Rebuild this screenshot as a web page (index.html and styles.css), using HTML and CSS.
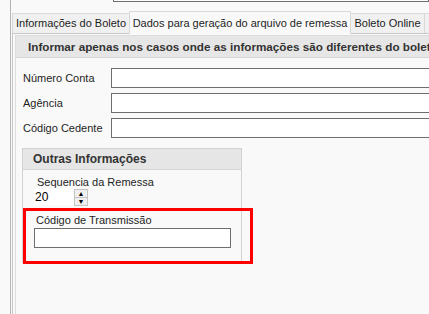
FILE: index.html
```html
<!DOCTYPE html>
<html lang="pt-BR">
<head>
  <meta charset="UTF-8">
  <title>Dados para geração do arquivo de remessa</title>
  <link rel="stylesheet" href="styles.css">
</head>
<body>
  <div class="window">
    <!-- borda inferior do campo que fica acima das abas -->
    <div class="top">
      <div class="top-field"></div>
    </div>

    <!-- Abas -->
    <div class="tabs">
      <div class="tab tab-boleto">Informações do Boleto</div>
      <div class="tab tab-remessa active">Dados para geração do arquivo de remessa</div>
      <div class="tab tab-online">Boleto Online</div>
      <div class="tab tab-more"></div>
    </div>

    <!-- Conteúdo da aba ativa -->
    <div class="page">
      <div class="inner">
        <div class="banner">Informar apenas nos casos onde as informações são diferentes do boleto</div>

        <div class="form">
          <div class="row">
            <span class="row-label">Número Conta</span>
            <div class="field"></div>
          </div>
          <div class="row">
            <span class="row-label">Agência</span>
            <div class="field"></div>
          </div>
          <div class="row">
            <span class="row-label">Código Cedente</span>
            <div class="field"></div>
          </div>
        </div>

        <div class="group">
          <div class="group-title">Outras Informações</div>
          <div class="group-body">
            <div class="label label-seq">Sequencia da Remessa</div>
            <div class="spin">
              <div class="spin-value">20</div>
              <div class="spin-buttons">
                <span class="spin-btn">&#9650;</span>
                <span class="spin-btn">&#9660;</span>
              </div>
            </div>
            <div class="label label-cod">Código de Transmissão</div>
            <div class="field field-cod"></div>
          </div>
        </div>

        <!-- destaque vermelho sobre o campo -->
        <div class="highlight"></div>
      </div>
    </div>
  </div>
</body>
</html>
```

FILE: styles.css
```css
/* ====== RESET ====== */
html, body {
  margin: 0;
  padding: 0;
}

body {
  width: 429px;
  height: 314px;
  overflow: hidden;
  background-color: #f9f9f9;
  color: #1e1e1e;
  font-family: "Liberation Sans", Arial, sans-serif;
  font-size: 11px;
}

/* ====== JANELA ====== */
.window {
  margin-left: 10px;
  height: 314px;
  overflow: hidden;
  border-left: 1px solid #b4b4b4;
}

.top {
  height: 11px;
}
.top-field {
  margin-left: 102px;
  height: 1px;
  background-color: #ffffff;
  border: 1px solid #6e6e6e;
  border-top: 0;
}

/* ====== ABAS ====== */
.tabs {
  display: flex;
  align-items: flex-end;
  height: 22px;
  margin-left: 1px;
}
.tab {
  flex: none;
  box-sizing: border-box;
  height: 20px;
  line-height: 19px;
  text-align: center;
  white-space: nowrap;
  background-color: #f0f0f0;
  border: 1px solid #d9d9d9;
  border-bottom: 0;
}
.tab + .tab {
  margin-left: -1px;
}
.tab.active {
  position: relative;
  height: 23px;
  margin-bottom: -1px;
  padding-top: 2px;
  background-color: #f9f9f9;
}
.tab-boleto { width: 118px; }
.tab-remessa { width: 222px; }
.tab-online { width: 75px; }
.tab-more { width: 30px; }

/* ====== PÁGINA ====== */
.page {
  margin-left: 1px;
  padding: 1px 0 0 2px;
  height: 280px;
  border-top: 1px solid #c8c8c8;
  border-left: 1px solid #c8c8c8;
}
.inner {
  position: relative;
  height: 280px;
  border-top: 1px solid #dcdcdc;
  border-left: 1px solid #dcdcdc;
}

.banner {
  height: 21px;
  line-height: 21px;
  padding-left: 12px;
  white-space: nowrap;
  overflow: hidden;
  background-color: #e6e6e6;
  border-bottom: 1px solid #d6d6d6;
  color: #333333;
  font-size: 11.7px;
  font-weight: bold;
}

/* ====== FORMULÁRIO ====== */
.form {
  display: flex;
  flex-direction: column;
  gap: 5px;
  padding: 10px 0 0 7px;
}
.row {
  display: flex;
  align-items: center;
}
.row-label {
  width: 88px;
  flex: none;
}
.field {
  flex: none;
  box-sizing: border-box;
  width: 340px;
  height: 20px;
  background-color: #ffffff;
  border: 1px solid #6e6e6e;
}

/* ====== GRUPO "OUTRAS INFORMAÇÕES" ====== */
.group {
  box-sizing: border-box;
  width: 220px;
  height: 115px;
  margin: 10px 0 0 6px;
  border: 1px solid #d2d2d2;
}
.group-title {
  height: 20px;
  line-height: 20px;
  padding-left: 10px;
  background-color: #e6e6e6;
  border-bottom: 1px solid #d6d6d6;
  color: #333333;
  font-size: 12px;
  font-weight: bold;
}
.group-body {
  padding-left: 11px;
}
.label {
  line-height: 14px;
}
.label-seq {
  margin: 5px 0 0 3px;
}
.label-cod {
  margin: 8px 0 0 2px;
}

.spin {
  display: flex;
  width: 54px;
  height: 16px;
}
.spin-value {
  flex: 1;
  padding-left: 1px;
  line-height: 16px;
  font-size: 12px;
  color: #000000;
  background-color: #ffffff;
}
.spin-buttons {
  display: flex;
  flex-direction: column;
  width: 14px;
}
.spin-btn {
  flex: 1;
  font-size: 7px;
  line-height: 7px;
  text-align: center;
  color: #000000;
  background-color: #f0f0f0;
  border: 1px solid #c4c4c4;
}
.spin-btn + .spin-btn {
  border-top: 0;
}

.field-cod {
  width: 197px;
  margin-top: 1px;
}

/* ====== DESTAQUE VERMELHO ====== */
.highlight {
  position: absolute;
  left: 7px;
  top: 172px;
  box-sizing: border-box;
  width: 230px;
  height: 56px;
  border: 3px solid #ff0000;
}
```
